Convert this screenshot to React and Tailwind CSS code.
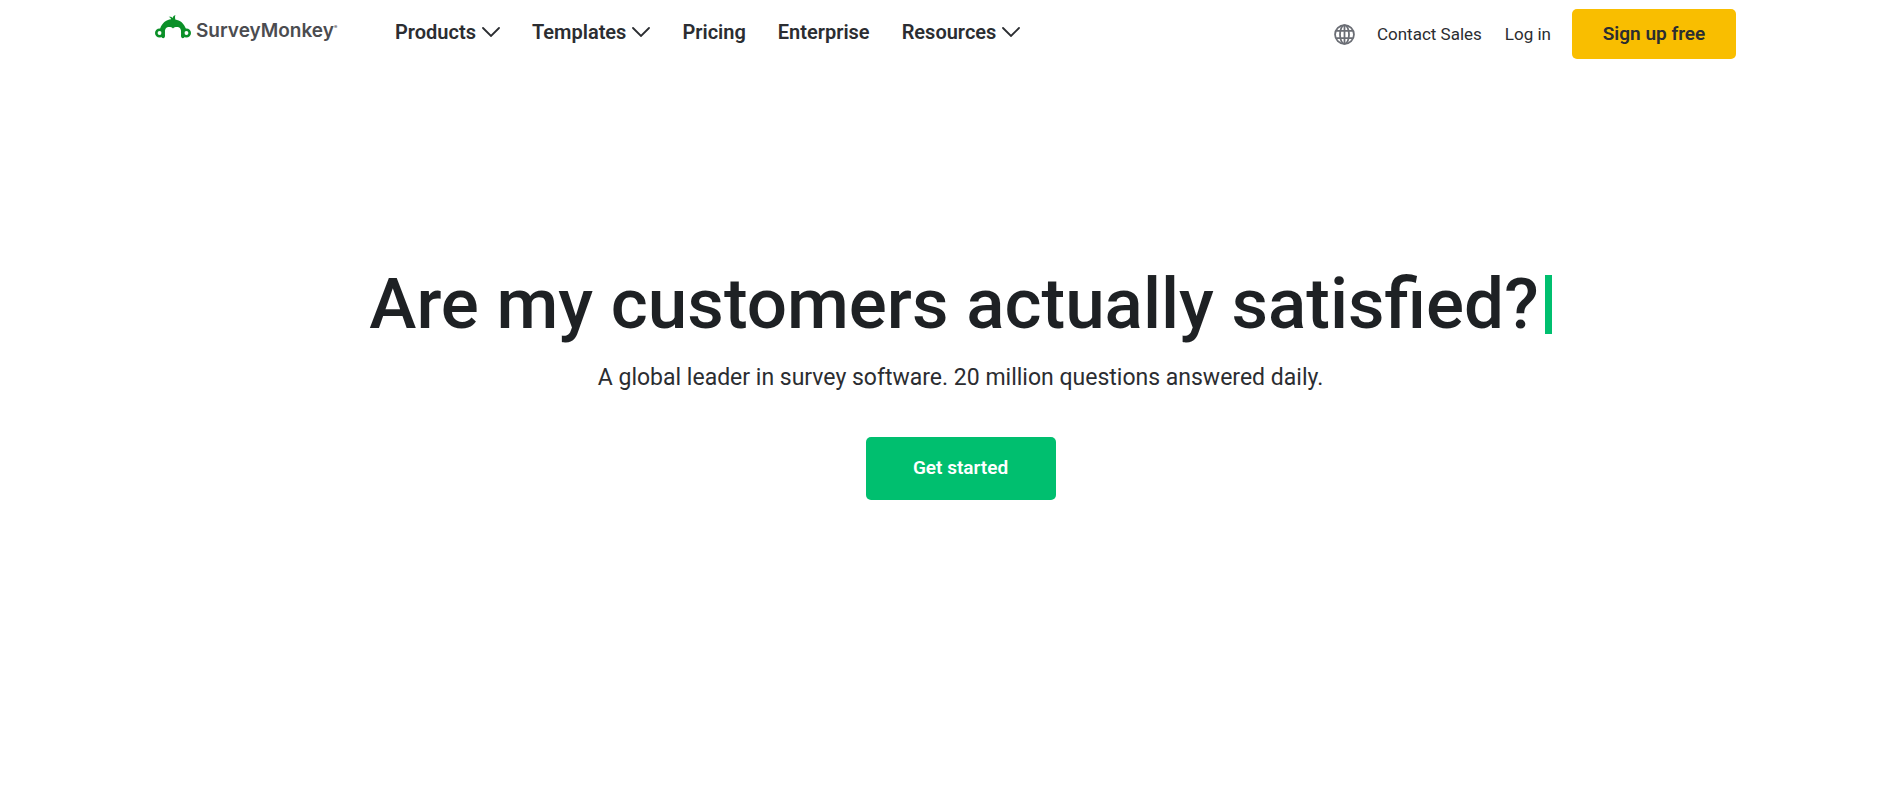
import React from "react";

const navItems = [
  { label: "Products", menu: true },
  { label: "Templates", menu: true },
  { label: "Pricing", menu: false },
  { label: "Enterprise", menu: false },
  { label: "Resources", menu: true },
];

const Chevron = () => (
  <svg
    className="w-[18px] h-[10px]"
    viewBox="0 0 18 10"
    fill="none"
    stroke="currentColor"
    strokeWidth="1.8"
    strokeLinecap="round"
    aria-hidden="true"
  >
    <path d="M1 1 L9 9 L17 1" />
  </svg>
);

const Globe = () => (
  <svg
    className="w-[21px] h-[21px]"
    viewBox="0 0 20 20"
    fill="none"
    stroke="currentColor"
    strokeWidth="1.7"
    aria-hidden="true"
  >
    <circle cx="10" cy="10" r="9" />
    <ellipse cx="10" cy="10" rx="4.3" ry="9" />
    <path d="M2 6.5 H18 M2 13.5 H18 M10 1 V19" />
  </svg>
);

const Logo = () => (
  <a href="#" className="flex items-start gap-[5px] text-[#4b4c50]">
    <svg className="w-9 h-6" viewBox="0 0 36 24" aria-hidden="true">
      <path
        d="M5 14 C7 8 11 5 16 4.3 C15.8 3 15 2.2 13.6 1.8 C15.4 1.4 16.8 1.9 17.6 3 C18 1.6 19 .6 20.5 .1 C19.8 1.6 20 2.8 20.3 4.4 C25 5.2 29 8 31 14 L30.5 18 L26.2 18.5 C26.4 14 24.8 12 22.2 12 C20 12 19 12.4 18 13.6 C17 12.4 16 12 13.8 12 C11.2 12 9.6 14 9.8 18.5 L5.5 18 Z"
        fill="#0b9028"
      />
      <g fill="#fff" stroke="#0b9028" strokeWidth="2.6">
        <circle cx="4.6" cy="18" r="3.3" />
        <circle cx="31.4" cy="18" r="3.3" />
      </g>
      <path
        d="M6.4 21 C6.5 24 10.2 24 10 20.5 L9.8 16 L7 15 Z M29.6 21 C29.5 24 25.8 24 26 20.5 L26.2 16 L29 15 Z"
        fill="#0b9028"
      />
    </svg>
    <span className="flex font-['Inter',sans-serif] text-[19px] leading-8 font-semibold">
      SurveyMonkey
      <span className="text-[5px] leading-6">®</span>
    </span>
  </a>
);

const Header = () => (
  <header className="flex items-start justify-between pl-[155px] pr-[157px] pt-[9px]">
    <div className="flex items-start">
      <div className="w-[240px] pt-1.5">
        <Logo />
      </div>
      <nav className="flex items-center gap-8 pt-[11px]">
        {navItems.map((item) =>
          item.menu ? (
            <button
              key={item.label}
              type="button"
              className="flex items-center gap-1.5 text-[20px] leading-6 font-semibold"
            >
              {item.label}
              <Chevron />
            </button>
          ) : (
            <a
              key={item.label}
              href="#"
              className="text-[20px] leading-6 font-semibold"
            >
              {item.label}
            </a>
          )
        )}
      </nav>
    </div>
    <div className="flex items-center text-[17px] leading-6">
      <button type="button" aria-label="Language" className="mr-[22px] text-[#6b6e75]">
        <Globe />
      </button>
      <a href="#" className="mr-[23px]">
        Contact Sales
      </a>
      <a href="#" className="mr-[21px]">
        Log in
      </a>
      <button
        type="button"
        className="h-[50px] w-[164px] rounded-[5px] bg-[#f9be00] text-[19px] font-semibold"
      >
        Sign up free
      </button>
    </div>
  </header>
);

const Hero = () => (
  <main className="flex flex-col items-center pl-7 pt-[205px] text-center">
    <h1 className="flex items-center justify-center gap-1.5 text-[71px] leading-[80px] font-medium text-[#1e2124]">
      Are my customers actually satisfied?
      <span className="h-[59px] w-[7px] bg-[#00bf6f]" />
    </h1>
    <p className="mt-[18px] text-[23px] leading-8">
      A global leader in survey software. 20 million questions answered daily.
    </p>
    <button
      type="button"
      className="mt-[43px] h-[63px] w-[190px] rounded-[5px] bg-[#00bf6f] text-[19px] font-semibold text-white"
    >
      Get started
    </button>
  </main>
);

const App = () => {
  return (
    <div className="min-h-screen bg-white font-['Roboto',sans-serif] text-[#2b2d31]">
      <Header />
      <Hero />
    </div>
  );
};

export default App;
